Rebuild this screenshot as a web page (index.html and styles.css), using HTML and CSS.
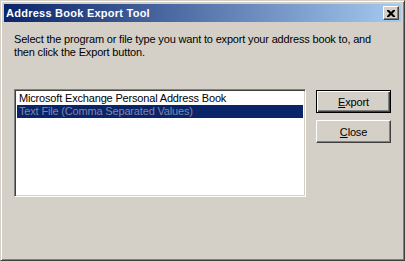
FILE: index.html
```html
<!DOCTYPE html>
<html lang="en">
<head>
  <meta charset="utf-8"/>
  <title>Address Book Export Tool</title>
  <link rel="stylesheet" href="styles.css">
</head>
<body>

<div class="window">
  <div class="titlebar">
    <span class="title">Address Book Export Tool</span>
    <button class="close-x" type="button" aria-label="Close">
      <svg width="8" height="7" viewBox="0 0 8 7">
        <path d="M0 0h2l2 2 2-2h2v1l-2.5 2.5L8 6v1H6L4 5 2 7H0V6l2.5-2.5L0 1z" fill="#000"/>
      </svg>
    </button>
  </div>

  <div class="content">
    <p class="intro">Select the program or file type you want to export your address book to, and then click the Export button.</p>

    <div class="main">
      <div class="listbox">
        <div class="item">Microsoft Exchange Personal Address Book</div>
        <div class="item selected">Text File (Comma Separated Values)</div>
      </div>
      <div class="buttons">
        <button class="btn default" type="button"><u>E</u>xport</button>
        <button class="btn" type="button"><u>C</u>lose</button>
      </div>
    </div>
  </div>
</div>

</body>
</html>
```

FILE: styles.css
```css
body {
  margin: 0;
  background: #d4d0c8;
  font-family: 'Liberation Sans', Arial, sans-serif;
  font-size: 11px;
  letter-spacing: -0.17px;
  color: #000;
}
.window {
  width: 405px;
  height: 261px;
  box-sizing: border-box;
  border: 1px solid;
  border-color: #d4d0c8 #404040 #404040 #d4d0c8;
  box-shadow: inset 1px 1px #fff, inset -1px -1px #808080;
  padding: 3px;
  background: #d4d0c8;
}
.titlebar {
  height: 18px;
  display: flex;
  align-items: center;
  justify-content: space-between;
  padding: 0 2px 0 2px;
  background: linear-gradient(to right, #0a246a, #a6caf0);
}
.title {
  color: #fff;
  font-weight: bold;
  font-size: 11px;
  letter-spacing: 0.25px;
}
.close-x {
  width: 16px;
  height: 14px;
  padding: 0;
  display: flex;
  align-items: center;
  justify-content: center;
  background: #d4d0c8;
  border: 1px solid;
  border-color: #fff #404040 #404040 #fff;
  box-shadow: inset -1px -1px #808080;
}
.content {
  padding: 11px 10px 0 10px;
}
.intro {
  margin: 0;
  line-height: 13px;
  width: 370px;
}
.main {
  display: flex;
  margin-top: 30px;
}
.listbox {
  width: 293px;
  height: 108px;
  box-sizing: border-box;
  background: #fff;
  border: 1px solid;
  border-color: #808080 #fff #fff #808080;
  box-shadow: inset 1px 1px #404040, inset -1px -1px #d4d0c8;
  padding: 2px;
}
.item {
  height: 13px;
  line-height: 13px;
  padding-left: 2px;
  white-space: nowrap;
  overflow: hidden;
}
.item.selected {
  background: #0a246a;
  color: #8484a8;
}
.buttons {
  display: flex;
  flex-direction: column;
  gap: 7px;
  margin-left: 10px;
  margin-top: 1px;
}
.btn {
  width: 75px;
  height: 23px;
  padding: 0;
  font-family: 'Liberation Sans', Arial, sans-serif;
  font-size: 11px;
  letter-spacing: -0.17px;
  color: #000;
  background: #d4d0c8;
  border: 1px solid;
  border-color: #fff #404040 #404040 #fff;
  box-shadow: inset -1px -1px #808080;
}
.btn.default {
  border: 1px solid #000;
  box-shadow: inset 1px 1px #fff, inset -1px -1px #404040, inset -2px -2px #808080;
}
```
